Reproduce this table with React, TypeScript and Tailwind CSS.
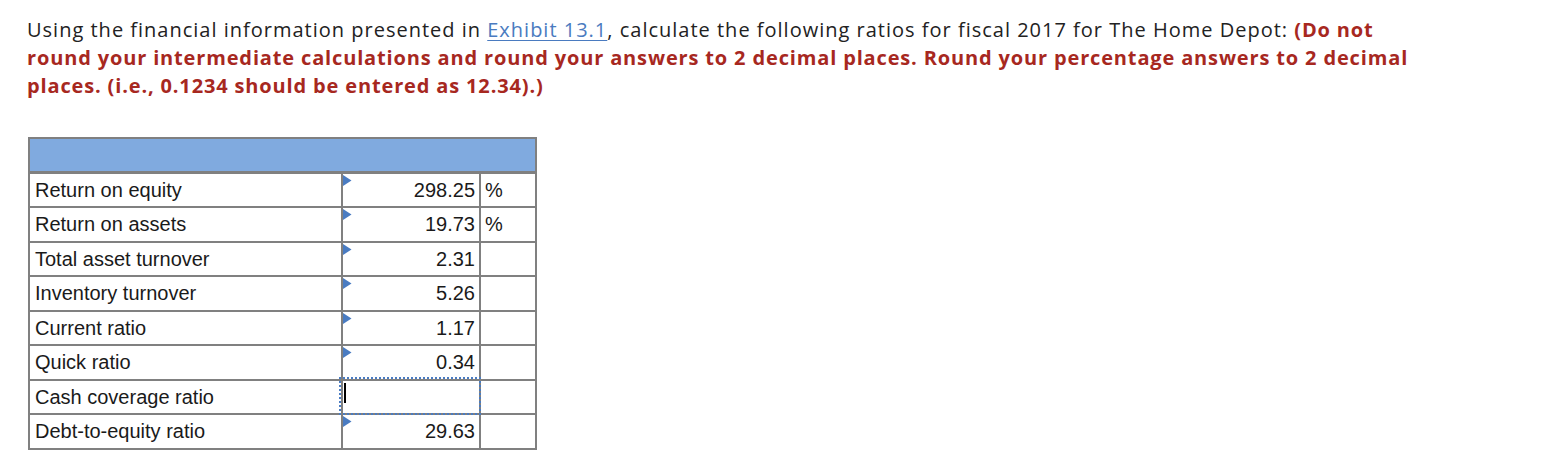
import React from 'react'

interface Ratio {
  label: string
  value: string
  unit?: string
  active?: boolean
}

const RATIOS: Ratio[] = [
  { label: 'Return on equity',     value: '298.25', unit: '%' },
  { label: 'Return on assets',     value: '19.73',  unit: '%' },
  { label: 'Total asset turnover', value: '2.31' },
  { label: 'Inventory turnover',   value: '5.26' },
  { label: 'Current ratio',        value: '1.17' },
  { label: 'Quick ratio',          value: '0.34' },
  { label: 'Cash coverage ratio',  value: '', active: true },
  { label: 'Debt-to-equity ratio', value: '29.63' },
]

function Marker() {
  return (
    <svg className="absolute left-0 top-[1px]" width="9" height="12" viewBox="0 0 9 12">
      <path d="M0 0 L8.5 5.5 L0 11 Z" fill="#4a7cc2" />
    </svg>
  )
}

export default function App() {
  return (
    <div className="min-h-[456px] bg-white pl-[27px] pt-[16px]">
      <p
        className="w-[1402px] text-[20px] leading-[28px] tracking-[1px] text-[#222222]"
        style={{ fontFamily: '"Open Sans", Lato, sans-serif' }}
      >
        Using the financial information presented in{' '}
        <a href="#" className="text-[#4a7bc0] underline underline-offset-[3px] decoration-[1px]">Exhibit 13.1</a>
        , calculate the following ratios for fiscal 2017 for The Home Depot:{' '}
        <strong className="font-bold tracking-[0.85px] text-[#a7281f]">
          (Do not round your intermediate calculations and round your answers to 2 decimal places. Round your
          percentage answers to 2 decimal places. (i.e., 0.1234 should be entered as 12.34).)
        </strong>
      </p>

      {/* ── Answer grid ─────────────────────────────────────────────── */}
      <div
        className="mt-[37px] ml-[1px] grid w-[509px] grid-cols-[311px_136px_54px] auto-rows-[32.5px] gap-[2px] bg-[#808080] p-[2px] text-[20px] text-[#1a1a1a]"
        style={{ fontFamily: '"Liberation Sans", Arial, sans-serif' }}
      >
        <div className="col-span-3 h-[32px] bg-[#80aadf]" />

        {RATIOS.map(r => (
          <React.Fragment key={r.label}>
            <div className="flex items-center bg-white pl-[5px]">{r.label}</div>
            <div className="relative flex items-center justify-end bg-white pr-[4px]">
              {r.active ? (
                <>
                  <div className="absolute -left-[4px] -right-[2px] -top-[4px] -bottom-[2px] border-[2.5px] border-dotted border-[#4a7cc2]" />
                  <span className="absolute left-[1px] top-[2px] h-[20px] w-[2px] bg-black" />
                </>
              ) : (
                <Marker />
              )}
              {r.value}
            </div>
            <div className="flex items-center bg-white pl-[4px]">{r.unit}</div>
          </React.Fragment>
        ))}
      </div>
    </div>
  )
}
